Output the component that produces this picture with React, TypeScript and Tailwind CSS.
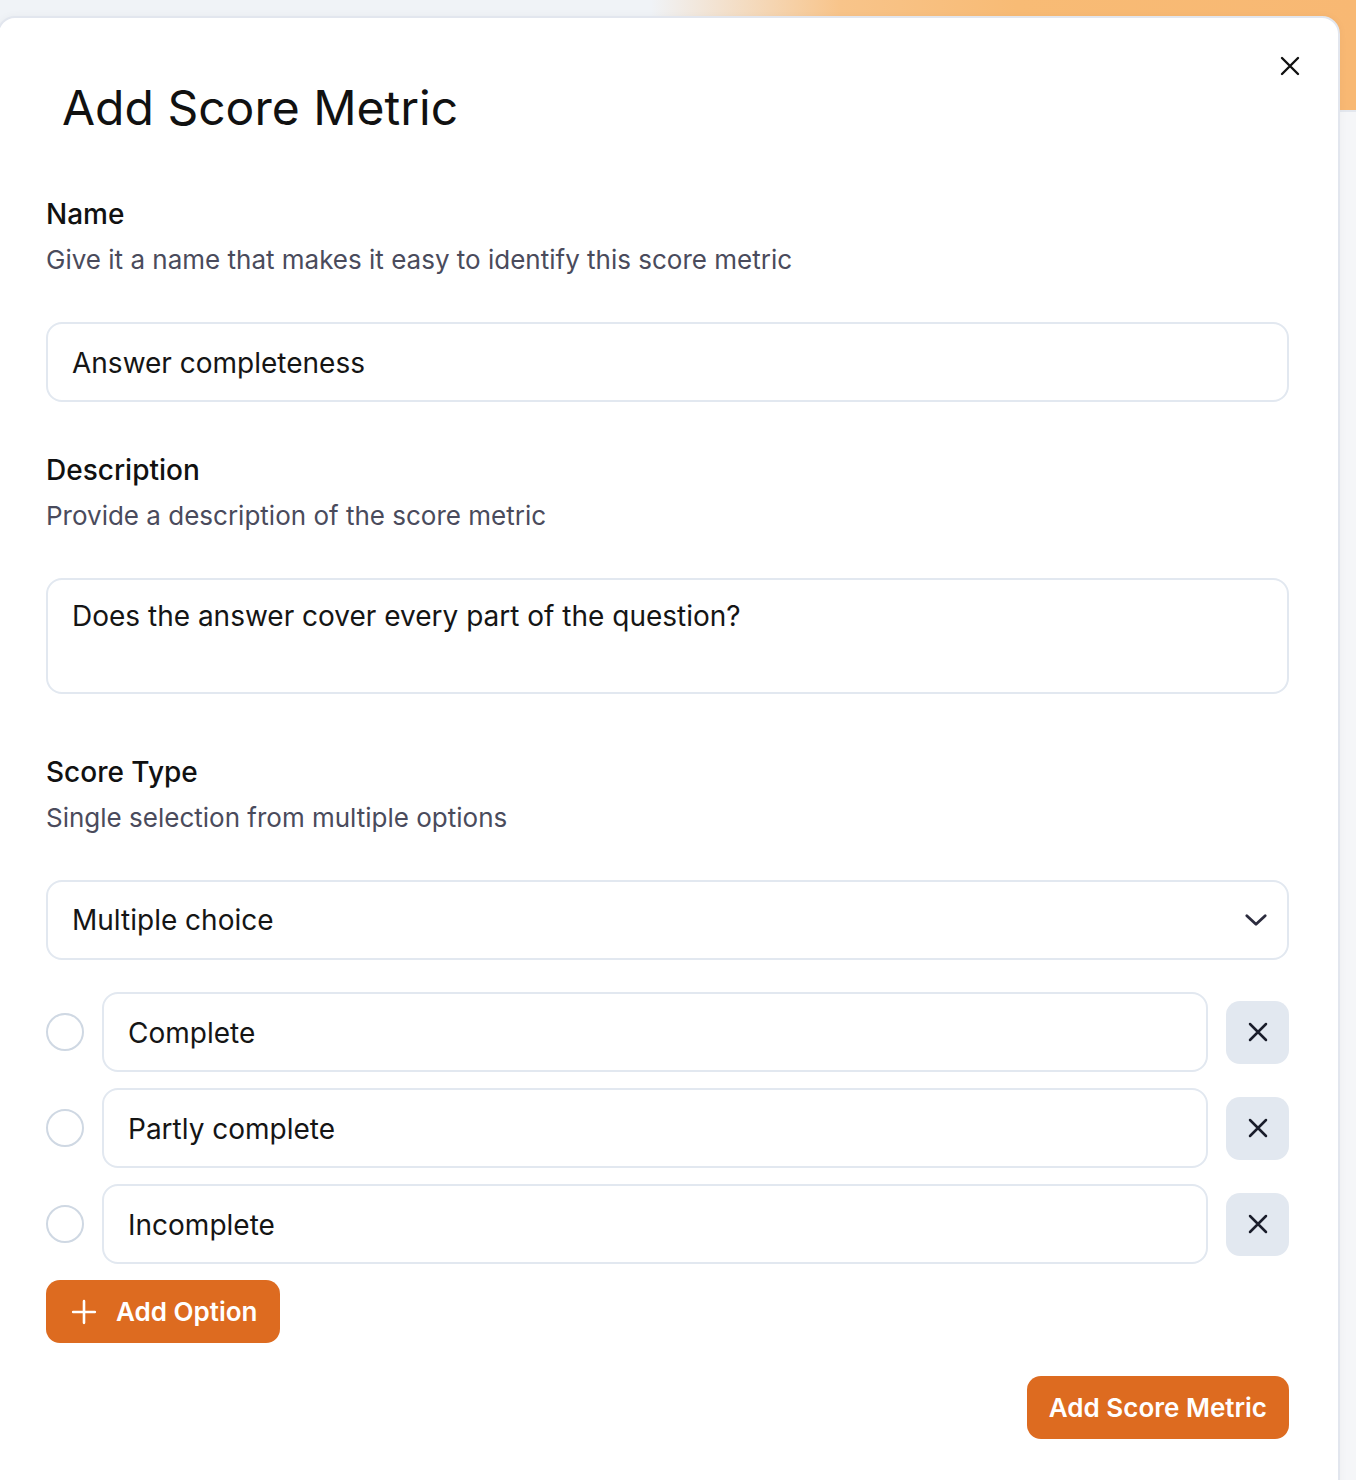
import React from "react";

const XIcon = ({ size = 24, stroke = 2.4, color = "#111" }: { size?: number; stroke?: number; color?: string }) => (
  <svg width={size} height={size} viewBox="0 0 24 24" fill="none" stroke={color} strokeWidth={stroke} strokeLinecap="round">
    <path d="M4 4 L20 20 M20 4 L4 20" />
  </svg>
);

const Field = ({ label, desc, children, mt }: { label: string; desc: string; children: React.ReactNode; mt: string }) => (
  <div className={mt}>
    <div className="text-[28px] leading-[36px] font-medium text-[#111111]">{label}</div>
    <div className="mt-[10px] text-[26px] leading-[36px] text-[#4a4b5c]">{desc}</div>
    <div className="mt-[44px]">{children}</div>
  </div>
);

const options = ["Complete", "Partly complete", "Incomplete"];

export default function App() {
  return (
    <div className="relative min-h-[1480px] overflow-hidden bg-[#f5f6f8] font-['Inter',sans-serif]">
      <div className="h-[112px] border-b-2 border-[#e3e7ee] bg-[linear-gradient(90deg,#f0f3f7_0%,#f0f3f7_48%,#f8c48a_62%,#f8bb75_75%,#f8b873_100%)]" />
      <div className="absolute left-[-3px] top-[16px] h-[1500px] w-[1343px] rounded-[18px] border-2 border-[#e2e6ee] bg-white shadow-[0_0_8px_rgba(0,0,0,0.04)]">
        <button className="absolute right-[34px] top-[34px] flex h-[28px] w-[28px] items-center justify-center">
          <XIcon size={24} stroke={2.4} color="#111" />
        </button>
        <div className="pl-[47px] pr-[49px] pt-[66px]">
          <h1 className="pl-[16px] text-[48px] font-normal leading-[48px] text-[#111111]">Add Score Metric</h1>

          <Field label="Name" desc="Give it a name that makes it easy to identify this score metric" mt="mt-[64px]">
            <div className="flex h-[80px] items-center rounded-[16px] border-2 border-[#e2e8f0] px-[24px] pt-[2px] text-[28px] text-[#151515]">
              Answer completeness
            </div>
          </Field>

          <Field label="Description" desc="Provide a description of the score metric" mt="mt-[50px]">
            <div className="h-[116px] rounded-[16px] border-2 border-[#e2e8f0] px-[24px] pt-[16px] text-[28px] leading-[40px] text-[#151515]">
              Does the answer cover every part of the question?
            </div>
          </Field>

          <Field label="Score Type" desc="Single selection from multiple options" mt="mt-[60px]">
            <div className="flex h-[80px] items-center justify-between rounded-[16px] border-2 border-[#e2e8f0] pl-[24px] pr-[18px] text-[28px] text-[#151515]">
              <span>Multiple choice</span>
              <svg width="26" height="26" viewBox="0 0 24 24" fill="none" stroke="#2c2c3e" strokeWidth="2.6" strokeLinecap="round" strokeLinejoin="round">
                <path d="M3.5 8 L12 16 L20.5 8" />
              </svg>
            </div>
          </Field>

          <div className="mt-[32px] flex flex-col gap-[16px]">
            {options.map((o) => (
              <div key={o} className="flex items-center gap-[18px]">
                <div className="h-[38px] w-[38px] shrink-0 rounded-full border-2 border-[#cfd8e3]" />
                <div className="flex h-[80px] flex-1 items-center rounded-[16px] border-2 border-[#e2e8f0] px-[24px] pt-[2px] text-[28px] text-[#151515]">
                  {o}
                </div>
                <button className="flex h-[63px] w-[63px] shrink-0 items-center justify-center rounded-[14px] bg-[#e2e8f0]">
                  <XIcon size={24} stroke={2.5} color="#1a1d2b" />
                </button>
              </div>
            ))}
          </div>

          <button className="mt-[16px] flex h-[63px] items-center gap-[19px] rounded-[14px] bg-[#dd6b20] pl-[25px] pr-[23px] text-[26px] font-semibold text-white">
            <svg width="26" height="26" viewBox="0 0 24 24" fill="none" stroke="white" strokeWidth="2.4" strokeLinecap="round">
              <path d="M12 2 V22 M2 12 H22" />
            </svg>
            Add Option
          </button>

          <div className="mt-[33px] flex justify-end">
            <button className="flex h-[63px] items-center rounded-[14px] bg-[#dd6b20] px-[22px] text-[26px] font-semibold text-white">
              Add Score Metric
            </button>
          </div>
        </div>
      </div>
    </div>
  );
}
